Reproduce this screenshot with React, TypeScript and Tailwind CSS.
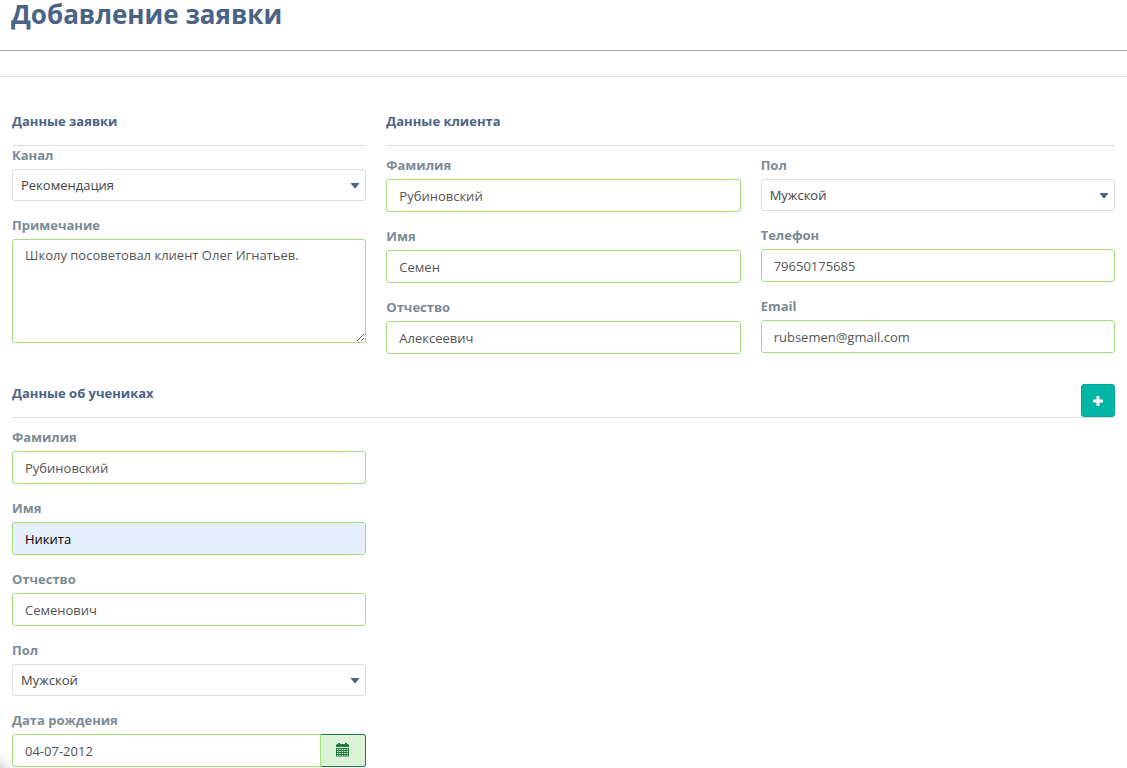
import { useId } from 'react';
import type { ReactNode } from 'react';
import clsx from 'clsx';

const GENDERS = ["Мужской", "Женский"];
const CHANNELS = ["Рекомендация", "Реклама", "Сайт"];

const inputClass =
  "block w-full h-[33px] px-3 border border-[#a3dd7d] rounded-[3px] text-[13px] text-[#555555] outline-none";

function Label({ id, children }: { id: string; children: ReactNode }) {
  return (
    <label htmlFor={id} className="block mb-[5px] leading-[18px] font-bold text-[#7b8a93]">
      {children}
    </label>
  );
}

function TextField({ label, value, type = "text", autofilled = false }: { label: string; value: string; type?: string; autofilled?: boolean }) {
  const id = useId();
  return (
    <div>
      <Label id={id}>{label}</Label>
      <input
        id={id}
        type={type}
        defaultValue={value}
        className={clsx(inputClass, autofilled ? "bg-[#e6effe] text-black" : "bg-white")}
      />
    </div>
  );
}

function SelectField({ label, options }: { label: string; options: string[] }) {
  const id = useId();
  return (
    <div>
      <Label id={id}>{label}</Label>
      <div className="relative">
        <select
          id={id}
          className="block w-full h-8 pt-[2px] pl-2 pr-8 appearance-none bg-white border border-[#dddddd] rounded-[3px] text-[13px] text-[#444444] outline-none"
        >
          {options.map((o) => (
            <option key={o}>{o}</option>
          ))}
        </select>
        <svg viewBox="0 0 8 5" className="absolute right-[7px] top-[14px] w-2 h-[5px] pointer-events-none" fill="#4a6385">
          <path d="M0 0h8v.8L4.6 5H3.4L0 .8z" />
        </svg>
      </div>
    </div>
  );
}

function NoteField({ label, value }: { label: string; value: string }) {
  const id = useId();
  return (
    <div>
      <Label id={id}>{label}</Label>
      <textarea
        id={id}
        defaultValue={value}
        className="block w-full h-[104px] px-3 py-[6px] bg-white border border-[#a3dd7d] rounded-[3px] text-[13px] leading-[18px] text-[#555555] resize outline-none"
      />
    </div>
  );
}

function DateField({ label, value }: { label: string; value: string }) {
  const id = useId();
  return (
    <div>
      <Label id={id}>{label}</Label>
      <div className="flex">
        <input id={id} type="text" defaultValue={value} className={clsx(inputClass, "flex-1 min-w-0 rounded-r-none bg-white")} />
        <button
          type="button"
          aria-label="Календарь"
          className="flex items-center justify-center w-[45px] h-[33px] pr-[2px] pb-[2px] bg-[#dcf3d8] border border-l-0 border-[#207c40] rounded-r-[3px]"
        >
          <svg viewBox="0 0 13 14" className="w-[13px] h-[14px]" fill="#207c40">
            <path d="M2 0h2v1h5V0h2v1h1l1 1v2H0V2l1-1h1z" />
            <path
              fillRule="evenodd"
              d="M0 5h13v8.5H0zM1 6v1h1.4V6zm2.4 0v1h1.4V6zm2.4 0v1h1.4V6zm2.4 0v1h1.4V6zm2.4 0v1H12V6zM1 8v1h1.4V8zm2.4 0v1h1.4V8zm2.4 0v1h1.4V8zm2.4 0v1h1.4V8zm2.4 0v1H12V8zM1 10v1h1.4v-1zm2.4 0v1h1.4v-1zm2.4 0v1h1.4v-1zm2.4 0v1h1.4v-1zm2.4 0v1H12v-1zM1 12v.7h1.4V12zm2.4 0v.7h1.4V12zm2.4 0v.7h1.4V12zm2.4 0v.7h1.4V12zm2.4 0v.7H12V12z"
            />
          </svg>
        </button>
      </div>
    </div>
  );
}

function SectionTitle({ children }: { children: ReactNode }) {
  return <h2 className="pb-[14px] border-b border-[#dddddd] leading-5 font-bold text-[#4a6385]">{children}</h2>;
}

export default function App() {
  return (
    <div className="bg-white font-['Open_Sans','Noto_Sans',sans-serif] text-[13px]">
      <header className="h-[51px] px-[11px] border-b border-[#aaaaaa]">
        <h1 className="text-[26px] leading-7 font-bold text-[#4a6385]">Добавление заявки</h1>
      </header>

      <form className="mt-[25px] pt-[34px] px-3 border-t border-[#dddddd]">
        <div className="grid grid-cols-3 gap-x-5">
          <section>
            <SectionTitle>Данные заявки</SectionTitle>
            <div className="flex flex-col gap-[15px]">
              <SelectField label="Канал" options={CHANNELS} />
              <NoteField label="Примечание" value="Школу посоветовал клиент Олег Игнатьев." />
            </div>
          </section>

          <section className="col-span-2">
            <SectionTitle>Данные клиента</SectionTitle>
            <div className="grid grid-cols-2 gap-x-5 pt-[10px]">
              <div className="flex flex-col gap-[15px]">
                <TextField label="Фамилия" value="Рубиновский" />
                <TextField label="Имя" value="Семен" />
                <TextField label="Отчество" value="Алексеевич" />
              </div>
              <div className="flex flex-col gap-[15px]">
                <SelectField label="Пол" options={GENDERS} />
                <TextField label="Телефон" value="79650175685" type="tel" />
                <TextField label="Email" value="rubsemen@gmail.com" type="email" />
              </div>
            </div>
          </section>
        </div>

        <section className="mt-[29px]">
          <div className="flex items-end border-b border-[#dddddd]">
            <h2 className="flex-1 pb-[14px] leading-5 font-bold text-[#4a6385]">Данные об учениках</h2>
            <button
              type="button"
              aria-label="Добавить ученика"
              className="flex items-center justify-center w-[34px] h-[33px] pt-px bg-[#00b5a6] border border-[#00a698] rounded-[3px]"
            >
              <svg viewBox="0 0 10 10" className="w-[10px] h-[10px]" fill="#ffffff">
                <path d="M3.8 0h2.4q.3 0 .3.3v3.2h3.2q.3 0 .3.3v2.4q0 .3-.3.3H6.500v3.2q0 .3-.3.3H3.800q-.3 0-.3-.3V6.500H.3q-.3 0-.3-.3V3.800q0-.3.3-.3h3.200V.3q0-.3.3-.3z" />
              </svg>
            </button>
          </div>

          <div className="grid grid-cols-3 gap-x-5 pt-[10px]">
            <div className="flex flex-col gap-[15px]">
              <TextField label="Фамилия" value="Рубиновский" />
              <TextField label="Имя" value="Никита" autofilled />
              <TextField label="Отчество" value="Семенович" />
              <SelectField label="Пол" options={GENDERS} />
              <DateField label="Дата рождения" value="04-07-2012" />
            </div>
          </div>
        </section>
      </form>

      {/* shadow of the collapsed corner widget */}
      <div className="fixed -left-9 -bottom-9 size-9 rounded-full shadow-[0_0_16px_6px_rgba(0,0,0,0.5)] pointer-events-none" />
    </div>
  );
}
